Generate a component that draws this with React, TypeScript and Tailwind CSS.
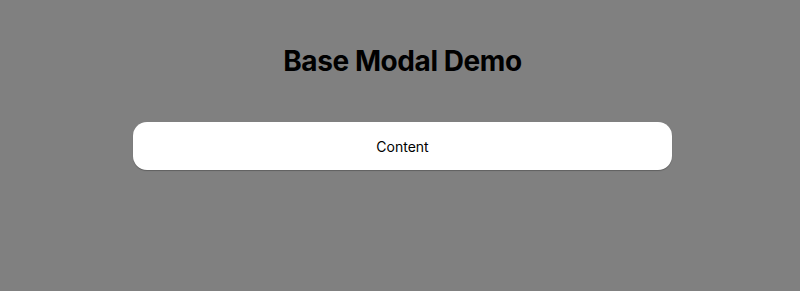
export default function App() {
  return (
    <div className="min-h-[291px] w-full bg-[#808080] pl-[5px] font-['Inter',sans-serif]">
      <div className="flex flex-col items-center pt-[44px]">
        <h1 className="text-[28px] font-bold leading-[34px] tracking-[-0.015em] text-black">Base Modal Demo</h1>
        <div className="mt-[44px] flex h-[48px] w-[539px] items-center justify-center rounded-[14px] bg-white shadow-[0_1px_1px_rgba(0,0,0,0.25)]">
          <span className="text-[14px] text-black">Content</span>
        </div>
      </div>
    </div>
  );
}
